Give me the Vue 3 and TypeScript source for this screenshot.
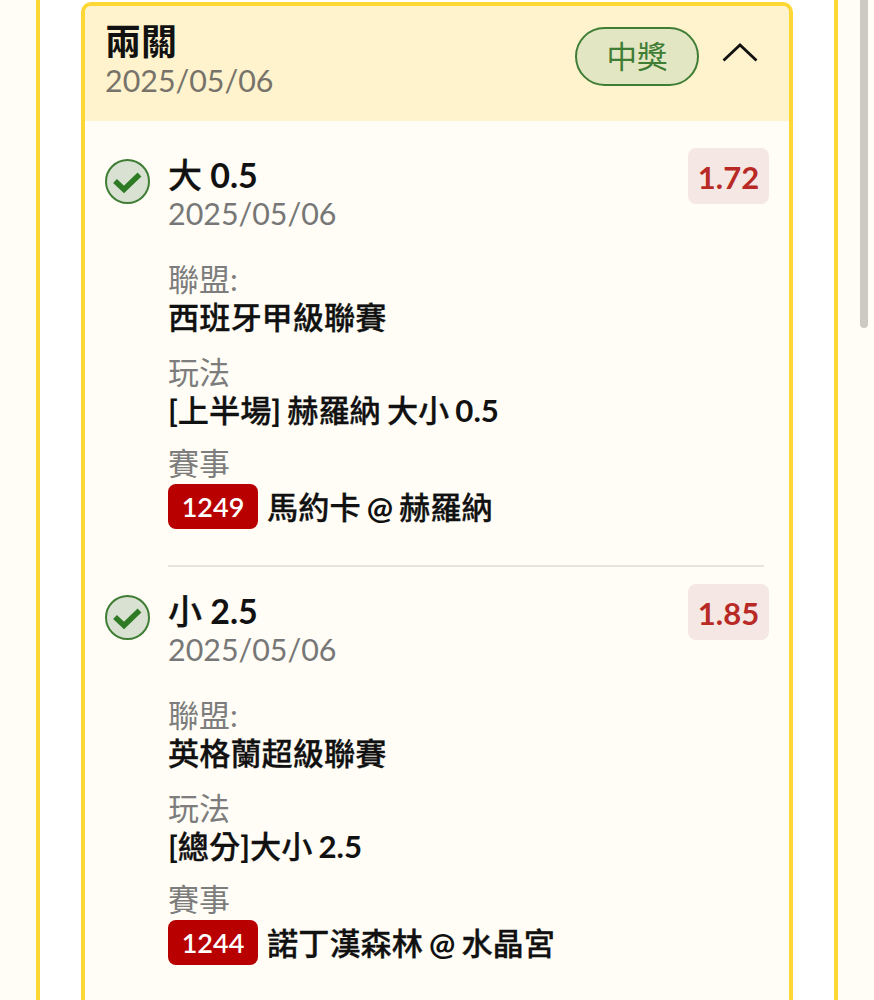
<script setup lang="ts">
interface Leg {
  title: string
  date: string
  odds: string
  league: string
  play: string
  code: string
  match: string
}

const legs: Leg[] = [
  {
    title: '大 0.5',
    date: '2025/05/06',
    odds: '1.72',
    league: '西班牙甲級聯賽',
    play: '[上半場] 赫羅納 大小 0.5',
    code: '1249',
    match: '馬約卡 @ 赫羅納'
  },
  {
    title: '小 2.5',
    date: '2025/05/06',
    odds: '1.85',
    league: '英格蘭超級聯賽',
    play: '[總分]大小 2.5',
    code: '1244',
    match: '諾丁漢森林 @ 水晶宮'
  }
]

// latin parts are heavier than the CJK parts in these rows
function Runs(text: string): string[] {
  return text.split(/([\x20-\x7e]+)/).filter(Boolean)
}

function IsLatin(run: string): boolean {
  return /^[\x20-\x7e]+$/.test(run)
}
</script>

<template>
  <div class="page">
    <div class="outer">
      <div class="card">
        <div class="head">
          <div class="head-text">
            <div class="head-title">兩關</div>
            <div class="date">2025/05/06</div>
          </div>
          <div class="won">中獎</div>
          <svg class="chevron" width="36" height="20" viewBox="0 0 36 20">
            <path d="M1.5 18.5 L18 3 L34.5 18.5" fill="none" stroke="#111" stroke-width="2.8" />
          </svg>
        </div>
        <div class="body">
          <div v-for="leg in legs" :key="leg.code" class="leg">
            <svg class="tick" width="46" height="46" viewBox="0 0 46 46">
              <circle cx="22.5" cy="22.5" r="21.5" fill="#d9e2d2" stroke="#3f7d35" stroke-width="2" />
              <path d="M10 22 L19 30.5 L34.5 15.5" fill="none" stroke="#2f7a24" stroke-width="5.5" />
            </svg>
            <div class="leg-main">
              <div class="leg-top">
                <div class="leg-heading">
                  <div class="leg-title">
                    <span v-for="run in Runs(leg.title)" :key="run" :class="{ latin: IsLatin(run) }">{{ run }}</span>
                  </div>
                  <div class="date">{{ leg.date }}</div>
                </div>
                <div class="odds">{{ leg.odds }}</div>
              </div>
              <div class="label label-first">聯盟:</div>
              <div class="value">{{ leg.league }}</div>
              <div class="label label-play">玩法</div>
              <div class="value">
                <span v-for="run in Runs(leg.play)" :key="run" :class="{ latin: IsLatin(run) }">{{ run }}</span>
              </div>
              <div class="label">賽事</div>
              <div class="match">
                <span class="code">{{ leg.code }}</span>
                <span class="value">
                  <span v-for="run in Runs(leg.match)" :key="run" :class="{ latin: IsLatin(run) }">{{ run }}</span>
                </span>
              </div>
            </div>
          </div>
        </div>
      </div>
    </div>
    <div class="scrollbar"></div>
  </div>
</template>

<style>
html,
body {
  margin: 0;
  background: #fffdf5;
}
</style>

<style scoped>
.page {
  position: relative;
  height: 1000px;
  overflow: hidden;
  background: #fffdf5;
  font-family: Lato, "Noto Sans CJK TC", sans-serif;
}

.outer {
  box-sizing: border-box;
  width: 802px;
  height: 1000px;
  margin-left: 36px;
  padding: 2px 41px 0;
  border-left: 4px solid #fdd835;
  border-right: 4px solid #fdd835;
  background: #fff;
}

.card {
  height: 1100px;
  border: 4px solid #fdd835;
  border-radius: 10px;
  background: #fffdf5;
}

.head {
  display: flex;
  align-items: flex-start;
  height: 115px;
  padding: 0 31px 0 20px;
  border-radius: 6px 6px 0 0;
  background: #fff3cd;
}

.head-text {
  flex: 1;
  padding-top: 15px;
}

.head-title {
  font-size: 36px;
  font-weight: 700;
  line-height: 41px;
  color: #111;
}

.date {
  font-size: 30.4px;
  line-height: 36px;
  color: #77736a;
}

.won {
  box-sizing: border-box;
  width: 124px;
  height: 59px;
  margin-top: 21px;
  border: 2px solid #3f7d35;
  border-radius: 30px;
  background: #e3e6c2;
  color: #3f7d35;
  font-size: 30.5px;
  line-height: 55px;
  text-align: center;
}

.chevron {
  margin: 36px 0 0 23px;
}

.body {
  padding: 27px 25px 0 20px;
}

.leg {
  display: flex;
  gap: 17px;
}

.tick {
  flex: none;
  margin-top: 11px;
}

.leg-main {
  flex: 1;
  padding-bottom: 36px;
}

.leg:first-child .leg-main {
  border-bottom: 2px solid #e6e4dc;
  margin-bottom: 17px;
}

.leg-top {
  display: flex;
  justify-content: space-between;
  align-items: flex-start;
  margin-right: -5px;
}

.leg-heading {
  padding-top: 6px;
}

.leg-title {
  font-size: 34px;
  font-weight: 500;
  line-height: 42px;
  color: #111;
  -webkit-text-stroke: 0.3px #111;
}

.leg-heading .date {
  line-height: 34px;
  color: #777;
}

.odds {
  box-sizing: border-box;
  width: 81px;
  height: 56px;
  border-radius: 8px;
  background: #f5e8e4;
  color: #b82a26;
  font-size: 31px;
  font-weight: 700;
  line-height: 58px;
  text-align: center;
}

.label {
  margin-top: 15.5px;
  font-size: 31px;
  line-height: 40px;
  color: #7d7d7d;
}

.label-first {
  margin-top: 29px;
}

.label-play {
  margin-top: 16.5px;
}

.value {
  font-size: 31.2px;
  font-weight: 500;
  line-height: 36px;
  color: #111;
  word-spacing: -1.5px;
  -webkit-text-stroke: 0.3px #111;
}

.latin {
  font-weight: 700;
  -webkit-text-stroke: 0;
}

.match {
  display: flex;
  align-items: center;
  gap: 9px;
  margin-top: 1px;
}

.code {
  width: 90px;
  height: 45px;
  border-radius: 8px;
  background: #b80000;
  color: #fff;
  font-size: 27px;
  font-weight: 600;
  line-height: 45px;
  text-align: center;
}

.scrollbar {
  position: absolute;
  top: 0;
  left: 860px;
  width: 8px;
  height: 328px;
  border-radius: 0 0 4px 4px;
  background: #cdcac4;
}
</style>
